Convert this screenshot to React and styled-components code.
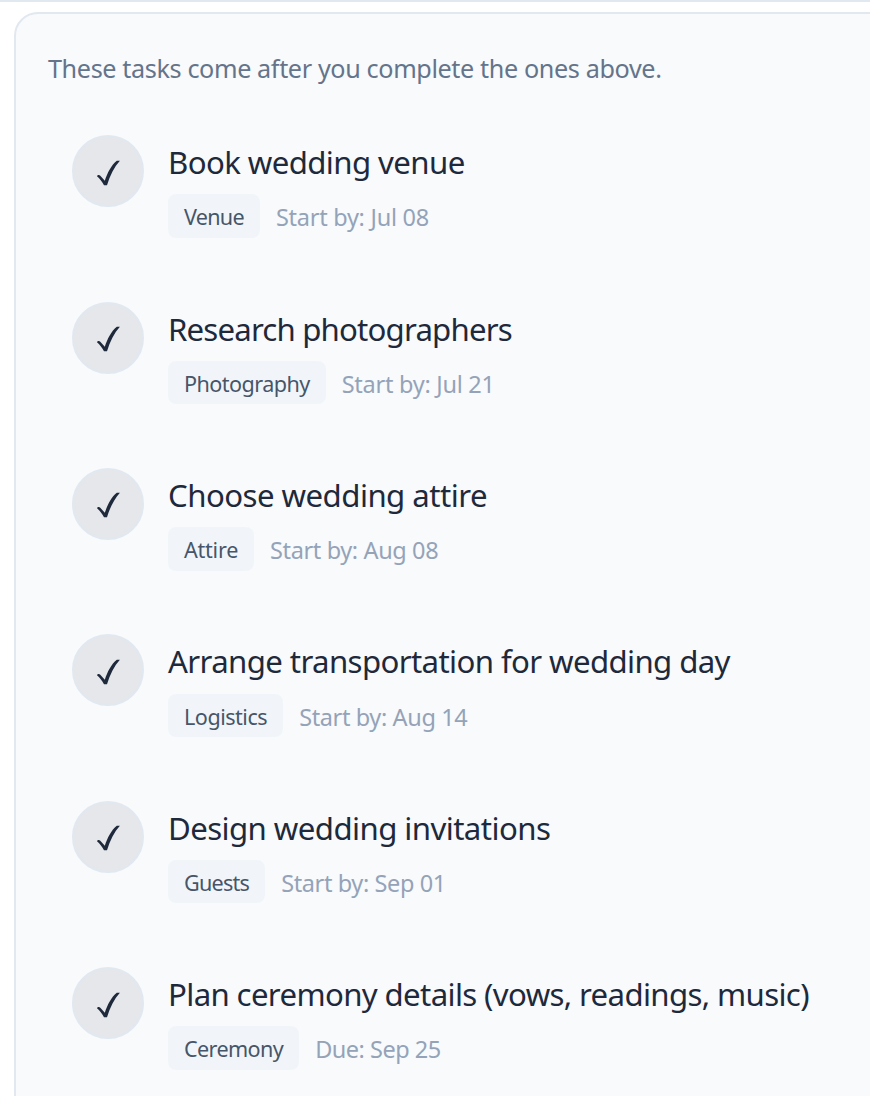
import React from 'react';
import styled, { createGlobalStyle } from 'styled-components';

const GlobalStyle = createGlobalStyle`
  * {
    box-sizing: border-box;
  }

  body {
    margin: 0;
    background: #ffffff;
    overflow: hidden;
    font-family: 'Segoe UI', 'Noto Sans', sans-serif;
  }
`;

const Page = styled.main`
  width: 870px;
  height: 1096px;
  overflow: hidden;
  border-top: 2px solid #e2e8f0;
  padding: 10px 0 0 14px;
`;

const Card = styled.section`
  width: 1000px;
  height: 1200px;
  border: 2px solid #e2e8f0;
  border-radius: 24px;
  background: #f8fafc;
  padding: 32px;
`;

const Intro = styled.p`
  margin: 0 0 21.2px;
  height: 44px;
  line-height: 44px;
  font-size: 25.2px;
  letter-spacing: -0.38px;
  color: #64748b;
  white-space: nowrap;
`;

const TaskList = styled.ul`
  list-style: none;
  margin: 0;
  padding: 0;
  display: flex;
  flex-direction: column;
  gap: 16px;
`;

const TaskRow = styled.li`
  display: flex;
  align-items: flex-start;
  gap: 24px;
  height: 150.4px;
  padding: 24px;
`;

const CheckButton = styled.button`
  width: 72px;
  height: 72px;
  flex-shrink: 0;
  display: flex;
  align-items: center;
  justify-content: center;
  padding: 3px 0 0;
  border: 2px solid #e2e8f0;
  border-radius: 50%;
  background: #e5e7eb;
`;

const TaskBody = styled.div`
  display: flex;
  flex-direction: column;
  white-space: nowrap;
`;

const TaskTitle = styled.h3`
  margin: 0 0 8px;
  height: 51.2px;
  line-height: 55.4px;
  font-size: 31.2px;
  font-weight: 400;
  letter-spacing: ${props => props.$spacing}px;
  color: #1e293b;
`;

const TaskMeta = styled.div`
  display: flex;
  align-items: center;
  gap: 16px;
  height: 43.4px;
`;

const Category = styled.span`
  height: 43.4px;
  line-height: 45px;
  padding: 0 16px;
  border-radius: 8px;
  background: #f1f5f9;
  color: #475569;
  font-size: 21.6px;
  letter-spacing: ${props => props.$spacing}px;
`;

const TaskDate = styled.span`
  color: #94a3b8;
  font-size: 23.5px;
  height: 43.4px;
  line-height: 46px;
  letter-spacing: ${props => props.$spacing}px;
`;

// tracking: letter spacing in px for title, category and date
const tasks = [
  { title: 'Book wedding venue', category: 'Venue', date: 'Start by: Jul 08', tracking: [-0.6, -0.73, -0.27] },
  { title: 'Research photographers', category: 'Photography', date: 'Start by: Jul 21', tracking: [-0.82, -0.56, -0.27] },
  { title: 'Choose wedding attire', category: 'Attire', date: 'Start by: Aug 08', tracking: [-0.54, -0.26, -0.38] },
  { title: 'Arrange transportation for wedding day', category: 'Logistics', date: 'Start by: Aug 14', tracking: [-0.62, -0.5, -0.38] },
  { title: 'Design wedding invitations', category: 'Guests', date: 'Start by: Sep 01', tracking: [-0.58, -0.76, -0.39] },
  { title: 'Plan ceremony details (vows, readings, music)', category: 'Ceremony', date: 'Due: Sep 25', tracking: [-0.64, -0.62, -0.5] }
];

const CheckMark = () => (
  <svg width="26" height="28" viewBox="0 0 26 28" fill="#1e293b">
    <path d="M2 17.3C2.4 15.9 4.2 15.6 5.3 16.8L9.8 21.8C12.4 13.8 16.3 6 21.8 1.7L24.9 1.7C19.2 8 14.9 16.5 12 26.3L9 26.3C7.2 23 5 19.8 2 17.3Z" />
  </svg>
);

const App = () => (
  <>
    <GlobalStyle />
    <Page>
      <Card>
        <Intro>These tasks come after you complete the ones above.</Intro>
        <TaskList>
          {tasks.map(task => (
            <TaskRow key={task.title}>
              <CheckButton aria-label="Mark complete">
                <CheckMark />
              </CheckButton>
              <TaskBody>
                <TaskTitle $spacing={task.tracking[0]}>{task.title}</TaskTitle>
                <TaskMeta>
                  <Category $spacing={task.tracking[1]}>{task.category}</Category>
                  <TaskDate $spacing={task.tracking[2]}>{task.date}</TaskDate>
                </TaskMeta>
              </TaskBody>
            </TaskRow>
          ))}
        </TaskList>
      </Card>
    </Page>
  </>
);

export default App;
